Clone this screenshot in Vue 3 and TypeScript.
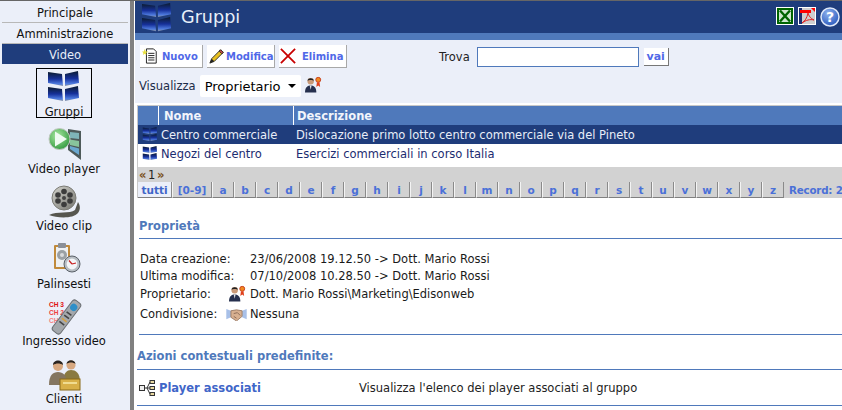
<template>
  <div class="page">
    <svg class="defs" width="0" height="0">
      <defs>
        <linearGradient id="scr" x1="0" y1="0" x2="0" y2="1">
          <stop offset="0" stop-color="#0c1c30" />
          <stop offset="0.5" stop-color="#16309a" />
          <stop offset="0.85" stop-color="#4f7ce0" />
          <stop offset="1" stop-color="#8a93a0" />
        </linearGradient>
        <radialGradient id="ball" cx="0.4" cy="0.35" r="0.75">
          <stop offset="0" stop-color="#a8e8a0" />
          <stop offset="1" stop-color="#2a9438" />
        </radialGradient>
        <radialGradient id="help" cx="0.4" cy="0.3" r="0.8">
          <stop offset="0" stop-color="#8fb2ee" />
          <stop offset="1" stop-color="#1f50b8" />
        </radialGradient>
        <linearGradient id="reel" x1="0" y1="0" x2="1" y2="1">
          <stop offset="0" stop-color="#d4d4ce" />
          <stop offset="1" stop-color="#74746e" />
        </linearGradient>
        <symbol id="i-group" viewBox="0 0 32 32">
          <polygon points="0,1 14,3 15,15 0,12" fill="url(#scr)" />
          <polygon points="17,3 30,0 31,12 17,15" fill="url(#scr)" />
          <polygon points="0,16 14,18 15,30 0,27" fill="url(#scr)" />
          <polygon points="17,18 30,15 31,27 17,30" fill="url(#scr)" />
        </symbol>
        <symbol id="i-owner" viewBox="0 0 18 18">
          <circle cx="6" cy="5" r="3.4" fill="#c99a78" />
          <path d="M2.6 4.5 C3 1 9 1 9.4 4.5 C8 3.4 4 3.4 2.6 4.5Z" fill="#222" />
          <path d="M0 17 C0 11 3 9.5 6 9.5 C9 9.5 12 11 12 17Z" fill="#26304e" />
          <path d="M5 9.5 H7 L6 14Z" fill="#e8e8e8" />
          <circle cx="14" cy="3.5" r="2.6" fill="#f08a20" stroke="#c83c18" />
          <path d="M12.6 6 L12 11 L14 9.6 L16 11 L15.4 6Z" fill="#e0401c" />
        </symbol>
      </defs>
    </svg>

    <aside class="side">
      <div v-for="tab in tabs" :key="tab" class="tab" :class="{ active: tab === 'Video' }">{{ tab }}</div>
      <div class="items">
        <div v-for="item in items" :key="item.label" class="item" :class="{ current: item.label === 'Gruppi' }">
          <svg v-if="item.icon === 'group'" class="ico" viewBox="0 0 32 32"><use href="#i-group" /></svg>
          <svg v-else-if="item.icon === 'player'" class="ico" viewBox="0 0 32 32">
            <polygon points="20,1 33,3 33,32 20,22" fill="#4e5a5a" />
            <polygon points="22,4 31,5 31,11 22,10" fill="#7fb4b8" />
            <polygon points="22,11.5 31,13 31,19 22,17" fill="#88c49c" />
            <polygon points="22,18 31,20.5 31,27 22,21" fill="#6aa8d0" />
            <circle cx="11.5" cy="11" r="10.5" fill="url(#ball)" stroke="#c0c8c0" />
            <polygon points="7,3.5 19,11 7,18.5" fill="#eefaf0" />
          </svg>
          <svg v-else-if="item.icon === 'clip'" class="ico" viewBox="0 0 32 32">
            <path d="M1 30 C9 33 25 34 30 28 C33 24 32 20 30 17 L27 25 C22 29 9 26 1 30Z" fill="#56564f" />
            <circle cx="16" cy="13" r="12" fill="url(#reel)" stroke="#7c7c76" />
            <circle cx="16" cy="13" r="2" fill="#444" />
            <circle cx="16" cy="6.5" r="2.8" fill="#3c3c3c" />
            <circle cx="16" cy="19.5" r="2.8" fill="#3c3c3c" />
            <circle cx="10" cy="10" r="2.8" fill="#3c3c3c" />
            <circle cx="22" cy="10" r="2.8" fill="#3c3c3c" />
            <circle cx="10" cy="16" r="2.8" fill="#3c3c3c" />
            <circle cx="22" cy="16" r="2.8" fill="#3c3c3c" />
          </svg>
          <svg v-else-if="item.icon === 'sched'" class="ico" viewBox="0 0 32 32">
            <rect x="6" y="2" width="16" height="24" rx="1" fill="#c08a3c" />
            <rect x="8" y="4" width="12" height="20" fill="#eef0f2" />
            <rect x="10" y="0" width="8" height="5" rx="1" fill="#8a8f98" />
            <circle cx="14" cy="12" r="5" fill="#9aa0a4" />
            <circle cx="14" cy="12" r="2" fill="#d8dadc" />
            <circle cx="24" cy="21" r="8" fill="#b8bec4" stroke="#5a6068" />
            <circle cx="24" cy="21" r="5.4" fill="#f4f6f8" />
            <path d="M24 21 L21 17.5 M24 21 L28 20" stroke="#c82020" stroke-width="1.2" />
          </svg>
          <svg v-else-if="item.icon === 'remote'" class="ico" viewBox="0 0 32 32">
            <text x="1" y="7" class="ch c3" textLength="15" lengthAdjust="spacingAndGlyphs">CH 3</text>
            <text x="1" y="15" class="ch c2" textLength="15" lengthAdjust="spacingAndGlyphs">CH 2</text>
            <text x="1" y="23" class="ch c1" textLength="15" lengthAdjust="spacingAndGlyphs">CH 1</text>
            <g transform="rotate(37 18.5 17)">
              <rect x="13.5" y="-2" width="10" height="38" rx="3" fill="#a4a8ac" stroke="#6a6e72" />
              <circle cx="18.5" cy="5" r="3.6" fill="#2f8fc8" />
              <rect x="15.5" y="12" width="6" height="1.6" fill="#444" />
              <rect x="15.5" y="16" width="6" height="1.6" fill="#444" />
              <rect x="15.5" y="20" width="6" height="1.6" fill="#d8a040" />
              <rect x="15.5" y="24" width="6" height="1.6" fill="#444" />
            </g>
          </svg>
          <svg v-else class="ico" viewBox="0 0 32 32">
            <circle cx="23" cy="7" r="4.6" fill="#d8a880" />
            <path d="M18.5 6 C19 1 27 1 27.5 6 C25 4 21 4 18.5 6Z" fill="#2a2420" />
            <path d="M15 24 C15 15 19 12 23 12 C28 12 32 15 32 24Z" fill="#8a7a40" />
            <circle cx="10" cy="8" r="5" fill="#d8a880" />
            <path d="M5 7 C5 1 15 1 15 7 C12 5 8 5 5 7Z" fill="#2a2420" />
            <path d="M1 27 C1 17 5 14 10 14 C15 14 19 17 19 27Z" fill="#847660" />
            <rect x="12" y="21" width="20" height="11" fill="#d8b048" stroke="#8a6a18" />
            <rect x="15" y="24" width="14" height="2" fill="#f0dc90" />
          </svg>
          <span>{{ item.label }}</span>
        </div>
      </div>
    </aside>

    <main class="main">
      <header class="head">
        <svg class="head-ico" viewBox="0 0 32 32"><use href="#i-group" /></svg>
        <h1>Gruppi</h1>
        <div class="head-tools">
          <svg class="tool" viewBox="0 0 18 18">
            <rect x="0.5" y="0.5" width="17" height="17" fill="#006400" stroke="#fff" />
            <rect x="3" y="3" width="12" height="12" fill="#cfe6cf" />
            <path d="M4 3.5 L14 14.5 M14 3.5 L9 9 L4 14.5" stroke="#006400" stroke-width="2.4" fill="none" />
          </svg>
          <svg class="tool" viewBox="0 0 18 18">
            <rect x="0.5" y="0.5" width="17" height="17" fill="#cfcfcf" stroke="#fff" />
            <rect x="1" y="1" width="3" height="16" fill="#1f2f6e" />
            <rect x="2" y="3" width="11" height="3" fill="#f00" />
            <path d="M13 1 L17 1 L17 5Z" fill="#f00" />
            <path d="M10 6 C9 11 7 14 4 16 C8 13 12 12 16 13 C12 11 11 9 10 6Z" fill="none" stroke="#e02020" />
          </svg>
          <svg class="tool help" viewBox="0 0 20 20">
            <circle cx="10" cy="10" r="9" fill="url(#help)" stroke="#dfe8f8" stroke-width="1.5" />
            <text x="10" y="15" class="q">?</text>
          </svg>
        </div>
      </header>
      <div class="strip"></div>

      <section class="toolbar">
        <div class="actions">
          <div class="btns">
            <button class="btn nuovo">
              <svg viewBox="0 0 18 18" class="btn-ico">
                <path d="M5 1 H13 L16 4 V17 H5Z" fill="#fff" stroke="#111" />
                <path d="M7 6 H14 M7 8.5 H14 M7 11 H14 M7 13.5 H14" stroke="#111" />
                <path d="M3 1 L4 4 L7 4 L4.5 5.5 L5 8 L3 6.5 L1 8 L1.5 5.5 L0 4 L2 4Z" fill="#e8e040" />
              </svg>
              Nuovo
            </button>
            <button class="btn modifica">
              <svg viewBox="0 0 18 18" class="btn-ico">
                <path d="M1 17 L3 12 L13 2 L16 5 L6 15Z" fill="#e8c020" stroke="#222" />
                <path d="M13 2 L16 5 L14.5 6.5 L11.5 3.5Z" fill="#d85050" stroke="#222" />
                <path d="M1 17 L3 12 L6 15Z" fill="#222" />
              </svg>
              Modifica
            </button>
            <button class="btn elimina">
              <svg viewBox="0 0 18 18" class="btn-ico">
                <path d="M1 1 L17 17 M17 1 L1 17" stroke="#c80000" stroke-width="2" />
              </svg>
              Elimina
            </button>
          </div>
          <div class="find">
            <label>Trova</label>
            <input class="find-box" type="text" />
            <button class="vai">vai</button>
          </div>
        </div>
        <div class="view">
          <label>Visualizza</label>
          <div class="select">Proprietario<i class="caret"></i></div>
          <svg class="owner-ico" viewBox="0 0 18 18"><use href="#i-owner" /></svg>
        </div>
      </section>

      <section class="grid">
        <div class="row th">
          <div class="c-ico"></div>
          <div class="c-name">Nome</div>
          <div class="c-desc">Descrizione</div>
        </div>
        <div v-for="(row, i) in rows" :key="row.name" class="row td" :class="{ sel: i === 0 }">
          <div class="c-ico"><svg class="row-ico" viewBox="0 0 32 32"><use href="#i-group" /></svg></div>
          <div class="c-name">{{ row.name }}</div>
          <div class="c-desc">{{ row.desc }}</div>
        </div>
        <div class="pager"><b>«</b> 1 <b>»</b></div>
        <div class="letters">
          <a v-for="l in letters" :key="l" class="letter" :class="{ all: l === 'tutti', num: l === '[0-9]' }">{{ l }}</a>
          <span class="record">Record: 2</span>
        </div>
      </section>

      <section class="details">
        <h2 class="props-title">Proprietà</h2>
        <div class="props">
          <div class="prop"><span class="k">Data creazione:</span><span class="v">23/06/2008 19.12.50 -&gt; Dott. Mario Rossi</span></div>
          <div class="prop"><span class="k">Ultima modifica:</span><span class="v">07/10/2008 10.28.50 -&gt; Dott. Mario Rossi</span></div>
          <div class="prop owner">
            <span class="k">Proprietario:</span>
            <svg class="prop-ico" viewBox="0 0 18 18"><use href="#i-owner" /></svg>
            <span class="v">Dott. Mario Rossi\Marketing\Edisonweb</span>
          </div>
          <div class="prop share">
            <span class="k">Condivisione:</span>
            <svg class="shake" viewBox="0 0 22 14">
              <path d="M0 1 L5 3 V10 L0 12Z" fill="#a8c0e8" />
              <path d="M22 1 L17 3 V10 L22 12Z" fill="#a8c0e8" />
              <path d="M5 3 L11 2 L17 3 V9 L11 14 L5 10Z" fill="#d8b090" stroke="#9a7c68" />
              <path d="M8 6 L12 5 L15 8 M8 9 L11 11" stroke="#8a6a58" fill="none" />
            </svg>
            <span class="v">Nessuna</span>
          </div>
        </div>
        <h2 class="ctx-title">Azioni contestuali predefinite:</h2>
        <div class="ctx-row">
          <svg class="tree" viewBox="0 0 16 16">
            <rect x="0.5" y="5.5" width="5" height="5" fill="#eee" stroke="#333" />
            <rect x="11" y="0.5" width="4.5" height="3" fill="#e8d8a0" stroke="#333" />
            <rect x="11" y="6.5" width="4.5" height="3" fill="#e8d8a0" stroke="#333" />
            <rect x="11" y="12.5" width="4.5" height="3" fill="#e8d8a0" stroke="#333" />
            <path d="M6 8 H11 M8 8 L11 2 M8 8 L11 14" stroke="#333" fill="none" />
          </svg>
          <a class="ctx-link">Player associati</a>
          <span class="ctx-desc">Visualizza l'elenco dei player associati al gruppo</span>
        </div>
      </section>
    </main>
  </div>
</template>

<script setup lang="ts">
const tabs: string[] = ['Principale', 'Amministrazione', 'Video']

const items = [
  { label: 'Gruppi', icon: 'group' },
  { label: 'Video player', icon: 'player' },
  { label: 'Video clip', icon: 'clip' },
  { label: 'Palinsesti', icon: 'sched' },
  { label: 'Ingresso video', icon: 'remote' },
  { label: 'Clienti', icon: 'clients' },
]

const rows = [
  { name: 'Centro commerciale', desc: 'Dislocazione primo lotto centro commerciale via del Pineto' },
  { name: 'Negozi del centro', desc: 'Esercizi commerciali in corso Italia' },
]

const letters: string[] = ['tutti', '[0-9]', ...'abcdefghijklmnopqrstuvwxyz'.split('')]
</script>

<style>
html, body {
  margin: 0;
  background: #fff;
  overflow: hidden;
}
</style>

<style scoped>
.page {
  display: flex;
  width: 842px;
  height: 410px;
  overflow: hidden;
  font-family: "DejaVu Sans", Verdana, sans-serif;
  font-size: 11.5px;
  color: #000;
  box-sizing: border-box;
  border-top: 1px solid #666;
  background: #fff;
}
.defs {
  position: absolute;
}
.side {
  flex: 0 0 130px;
  box-sizing: border-box;
  padding: 1px 2px 0 2px;
  background: #ebeff9;
}
.tab {
  height: 20px;
  line-height: 23px;
  width: 126px;
  text-align: center;
  color: #111;
  border-bottom: 1px solid #b8b8b8;
}
.tab:nth-child(3) {
  border-bottom-width: 2px;
}
.tab.active {
  background: #1f3d7c;
  color: #e8eef8;
  border-bottom: 0;
}
.items {
  display: flex;
  flex-direction: column;
  align-items: center;
  padding-top: 4px;
  width: 124px;
}
.item {
  display: flex;
  flex-direction: column;
  align-items: center;
  width: 56px;
  height: 57.5px;
  box-sizing: border-box;
  padding-top: 3.5px;
  line-height: 14px;
  white-space: nowrap;
  color: #111;
}
.item.current {
  height: 50px;
  border: 1px solid #000;
  padding-top: 2px;
  margin-bottom: 6px;
}
.ico {
  flex: none;
  width: 32px;
  height: 32px;
  margin-bottom: 2px;
  overflow: visible;
}
.ch {
  font-family: "Liberation Sans", sans-serif;
  font-size: 7px;
  font-weight: 700;
}
.c3 { fill: #e01010; }
.c2 { fill: #ee4040; }
.c1 { fill: #f78080; }

.main {
  flex: 1;
  min-width: 0;
  box-sizing: border-box;
  border-left: 4px solid #808080;
  padding-left: 1px;
  background: #fff;
}
.head {
  display: flex;
  align-items: center;
  height: 32px;
  background: #1f3d7c;
  padding-left: 6px;
  color: #e8f0fa;
}
.head-ico {
  width: 32px;
  height: 30px;
  margin-top: 1px;
}
.head h1 {
  margin: 0 0 0 8px;
  font-size: 17.6px;
  font-weight: 400;
  line-height: 32px;
}
.head-tools {
  display: flex;
  align-items: flex-start;
  gap: 4px;
  align-self: flex-start;
  margin-left: auto;
  padding: 6px 2px 0 0;
}
.tool {
  width: 18px;
  height: 18px;
}
.tool.help {
  width: 20px;
  height: 20px;
  margin-top: -0.5px;
}
.q {
  font-family: "DejaVu Sans", sans-serif;
  font-size: 14px;
  font-weight: 700;
  text-anchor: middle;
  fill: #fff;
}
.strip {
  height: 7px;
  background: #4f79bb;
}
.toolbar {
  height: 65px;
  box-sizing: border-box;
  background: #ebeff9;
  padding: 5px 0 0 5px;
  border-bottom: 2px solid #fff;
}
.actions {
  display: flex;
  align-items: flex-start;
}
.btns {
  display: flex;
  gap: 4px;
  width: 299px;
}
.btn {
  display: flex;
  align-items: center;
  height: 23px;
  padding: 0;
  border: 0;
  border-right: 1px solid #a8a8a8;
  border-bottom: 1px solid #a8a8a8;
  background: #fff;
  font-family: "DejaVu Sans", sans-serif;
  font-size: 10px;
  font-weight: 700;
  color: #5068e8;
}
.nuovo { width: 63px; padding-left: 2px; gap: 4px; }
.modifica { width: 68px; padding-left: 2px; gap: 1px; }
.elimina { width: 68px; padding-left: 1px; gap: 6px; }
.btn-ico {
  width: 16px;
  height: 18px;
  flex: none;
}
.find {
  display: flex;
  align-items: center;
  gap: 5px;
  height: 20px;
  margin-top: 2px;
  color: #222;
}
.find-box {
  width: 162px;
  height: 20px;
  box-sizing: border-box;
  border: 1px solid #4f79bb;
  background: #fff;
  padding: 0;
  margin-left: 2px;
}
.vai {
  width: 25px;
  height: 18px;
  padding: 0;
  border: 0;
  border-right: 1px solid #777;
  border-bottom: 1px solid #777;
  background: #fff;
  font-family: "DejaVu Sans", sans-serif;
  font-size: 11px;
  font-weight: 700;
  color: #5068e8;
}
.view {
  display: flex;
  align-items: center;
  margin: 7px 0 0 -1px;
  height: 22px;
  color: #1c2c48;
}
.select {
  display: flex;
  align-items: center;
  width: 101px;
  height: 22px;
  box-sizing: border-box;
  margin-left: 4px;
  padding-left: 5px;
  background: #fff;
  font-size: 13px;
  color: #000;
  border-radius: 2px;
}
.caret {
  margin-left: auto;
  margin-right: 5px;
  border: 4px solid transparent;
  border-top: 4px solid #000;
  border-bottom: 0;
}
.owner-ico {
  width: 17px;
  height: 18px;
  margin-left: 4px;
  margin-bottom: 2px;
}
.grid {
  margin-left: 2px;
  border-left: 1px solid #c8c8c8;
  border-top: 1px solid #c8c8c8;
}
.row {
  display: flex;
}
.th {
  height: 19px;
  background: #4f79bb;
  color: #f2f5fb;
  font-weight: 700;
  line-height: 21px;
}
.th .c-ico { border-right: 1px solid #fff; width: 21px; box-sizing: border-box; }
.th .c-name { border-right: 1px solid #fff; width: 135px; padding-left: 5px; box-sizing: border-box; }
.th .c-desc { padding-left: 3px; }
.td {
  height: 19px;
  line-height: 21px;
  color: #1c2c70;
  white-space: nowrap;
}
.td.sel {
  background: #1f3d7c;
  color: #e8eef8;
}
.td + .td {
  height: 23px;
  line-height: 21px;
  background: #fff;
}
.c-ico {
  flex: none;
}
.td .c-ico { width: 23px; padding-left: 4px; box-sizing: border-box; }
.td .c-name { width: 135px; flex: none; }
.row-ico {
  width: 16px;
  height: 15px;
  display: block;
  margin-top: 2px;
}
.pager {
  height: 15px;
  line-height: 16px;
  background: #d2d2d2;
  padding-left: 1px;
  color: #222;
  word-spacing: -2px;
}
.pager b { font-weight: 700; color: #7a5020; }
.letters {
  display: flex;
  align-items: stretch;
  height: 16px;
  background: #d2d2d2;
  white-space: nowrap;
  overflow: hidden;
}
.letter {
  flex: none;
  box-sizing: border-box;
  width: 22px;
  height: 16px;
  background: #d2d2d2;
  border-right: 1px solid #8a8a8a;
  border-left: 1px solid #f4f4f4;
  border-bottom: 1px solid #808080;
  text-align: center;
  font-size: 10.5px;
  font-weight: 700;
  line-height: 16px;
  color: #4a70d8;
}
.letter.all {
  width: 34px;
  background: #ebeff9;
  color: #3f66c8;
  border-left: 0;
}
.letter.num {
  width: 40px;
}
.record {
  margin-left: 5px;
  font-size: 10.3px;
  letter-spacing: -0.2px;
  font-weight: 700;
  line-height: 16px;
  color: #4a70d8;
}
.details {
  padding-left: 2px;
}
.props-title {
  margin: 0 0 0 2px;
  padding: 21px 0 5px;
  font-size: 11.5px;
  line-height: 14px;
  font-weight: 700;
  color: #4f79bb;
  border-bottom: 1px solid #4f79bb;
}
.props {
  margin-left: 2px;
  padding: 11px 0 9px 1px;
  border-bottom: 1px solid #4f79bb;
}
.prop {
  display: flex;
  align-items: center;
  height: 17px;
  color: #1a1a1a;
  white-space: nowrap;
}
.prop .k {
  width: 110px;
  flex: none;
}
.prop.owner {
  height: 19px;
}
.prop.owner .k { width: 89px; }
.prop.share {
  height: 22px;
}
.prop.share .k { width: 86px; }
.prop-ico {
  width: 17px;
  height: 18px;
  margin-right: 4px;
}
.shake {
  width: 21px;
  height: 13px;
  margin-right: 3px;
}
.ctx-title {
  margin: 0;
  padding: 14px 0 6px;
  font-size: 11.5px;
  line-height: 14px;
  font-weight: 700;
  color: #4f79bb;
  border-bottom: 1px solid #4f79bb;
}
.ctx-row {
  display: flex;
  align-items: center;
  height: 36px;
  border-bottom: 1px solid #4f79bb;
  box-sizing: border-box;
  white-space: nowrap;
}
.tree {
  width: 16px;
  height: 16px;
  margin: 0 4px 0 2px;
}
.ctx-link {
  width: 200px;
  font-weight: 700;
  color: #3f66c8;
}
.ctx-desc {
  color: #222;
}
</style>
